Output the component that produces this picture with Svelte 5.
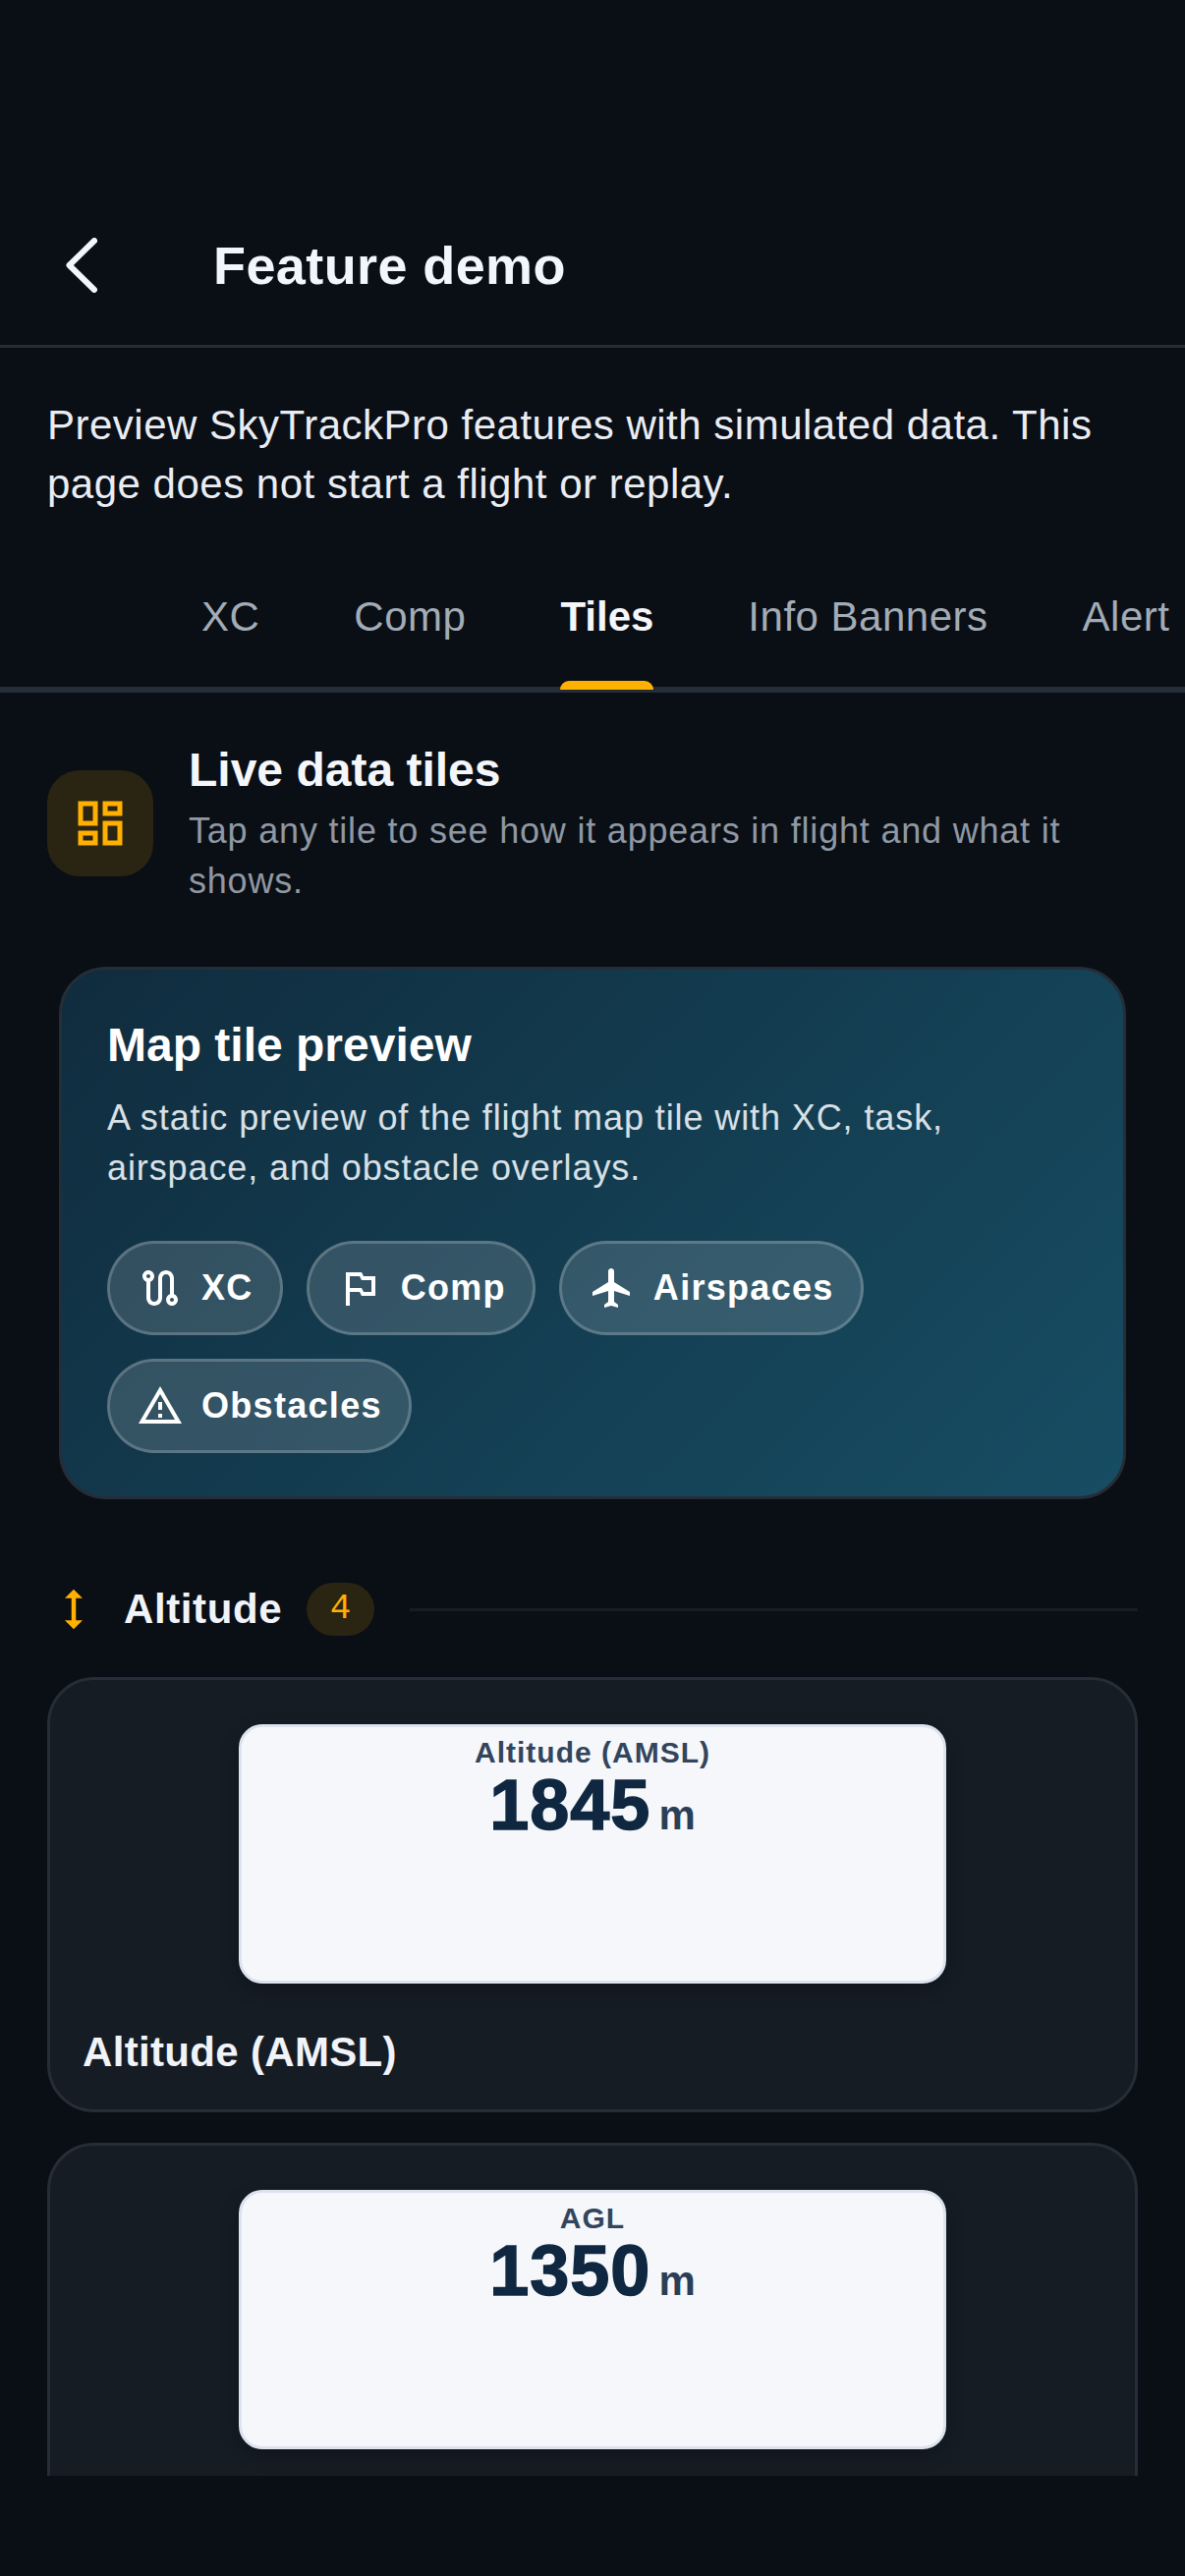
<script>
  const tabs = ['XC', 'Comp', 'Tiles', 'Info Banners', 'Alert'];
  const pills = [
    { label: 'XC', d: 'M19 15.18V7c0-2.21-1.79-4-4-4s-4 1.79-4 4v10c0 1.1-.9 2-2 2s-2-.9-2-2V8.82C8.16 8.4 9 7.3 9 6c0-1.66-1.34-3-3-3S3 4.34 3 6c0 1.3.84 2.4 2 2.82V17c0 2.21 1.79 4 4 4s4-1.79 4-4V7c0-1.1.9-2 2-2s2 .9 2 2v8.18c-1.16.41-2 1.51-2 2.82 0 1.66 1.34 3 3 3s3-1.34 3-3c0-1.3-.84-2.4-2-2.82zM6 5c.55 0 1 .45 1 1s-.45 1-1 1-1-.45-1-1 .45-1 1-1zm12 14c-.55 0-1-.45-1-1s.45-1 1-1 1 .45 1 1-.45 1-1 1z' },
    { label: 'Comp', d: 'M14 6l-1-2H5v17h2v-7h5l1 2h7V6h-6zm4 8h-4l-1-2H7V6h5l1 2h5v6z' },
    { label: 'Airspaces', d: 'M21 16v-2l-8-5V3.5c0-.83-.67-1.5-1.5-1.5S10 2.67 10 3.5V9l-8 5v2l8-2.5V19l-2 1.5V22l3.5-1 3.5 1v-1.5L13 19v-5.5l8 2.5z' },
    { label: 'Obstacles', d: 'M12 5.99L19.53 19H4.47L12 5.99M12 2L1 21h22L12 2zm1 14h-2v2h2v-2zm0-6h-2v4h2v-4z' }
  ];
  const tiles = [
    { inner: 'Altitude (AMSL)', value: '1845', unit: 'm', name: 'Altitude (AMSL)' },
    { inner: 'AGL', value: '1350', unit: 'm', name: '' }
  ];
</script>

<div class="page">
  <header class="top">
    <button class="back" aria-label="Back">
      <svg viewBox="0 0 32 56" width="32" height="56" fill="none"><path d="M29 3 3.5 28 29 53" stroke="#f2f5fa" stroke-width="6" stroke-linecap="round" stroke-linejoin="round"/></svg>
    </button>
    <h1>Feature demo</h1>
  </header>

  <p class="intro">Preview SkyTrackPro features with simulated data. This page does not start a flight or replay.</p>

  <nav class="tabs">
    {#each tabs as t}
      <span class="tab" class:active={t === 'Tiles'}>{t}</span>
    {/each}
  </nav>

  <main class="scroll">
    <section class="head">
      <div class="head-icon">
        <svg viewBox="0 0 24 24" width="60" height="60" fill="#ffb000"><path d="M19 5v2h-4V5h4M9 5v6H5V5h4m10 8v6h-4v-6h4M9 17v2H5v-2h4M21 3h-8v6h8V3zM11 3H3v10h8V3zm10 8h-8v10h8V11zm-10 4H3v6h8v-6z"/></svg>
      </div>
      <div class="head-text">
        <h2>Live data tiles</h2>
        <p>Tap any tile to see how it appears in flight and what it shows.</p>
      </div>
    </section>

    <section class="map">
      <h3>Map tile preview</h3>
      <p>A static preview of the flight map tile with XC, task, airspace, and obstacle overlays.</p>
      <div class="pills">
        {#each pills as p}
          <span class="pill">
            <svg viewBox="0 0 24 24" width="48" height="48" fill="#fff"><path d={p.d}/></svg>
            {p.label}
          </span>
        {/each}
      </div>
    </section>

    <div class="group">
      <svg viewBox="0 0 24 24" width="54" height="54" fill="#ffb000"><path d="M13 6.99h3L12 3 8 6.99h3v10.02H8L12 21l4-3.99h-3z"/></svg>
      <span class="group-name">Altitude</span>
      <span class="badge">4</span>
      <span class="rule"></span>
    </div>

    <div class="list">
      {#each tiles as t}
        <article class="tile">
          <div class="preview">
            <div class="p-label">{t.inner}</div>
            <div class="p-value"><span class="num">{t.value}</span><span class="unit">{t.unit}</span></div>
          </div>
          {#if t.name}<div class="name">{t.name}</div>{/if}
        </article>
      {/each}
    </div>
  </main>
</div>

<style>
  :global(body) { margin: 0; background: #0a0e15; }
  .page {
    width: 1206px; height: 2622px; padding-bottom: 102px; box-sizing: border-box;
    display: flex; flex-direction: column; overflow: hidden;
    background: #0a0e15; color: #f2f5fa;
    font-family: "Liberation Sans", Arial, sans-serif;
  }
  .top {
    display: flex; align-items: center; height: 354px; padding-top: 189px;
    box-sizing: border-box; border-bottom: 3px solid #252e38; flex: none;
  }
  .back { background: none; border: 0; padding: 0; margin-left: 67px; width: 150px; height: 56px; text-align: left; display: block; }
  h1 { margin: 0; font-size: 54px; line-height: 66px; font-weight: 700; letter-spacing: .4px; }
  .intro { margin: 0; padding: 49px 48px 0; height: 120px; font-size: 42px; line-height: 60px; letter-spacing: .5px; color: #e9edf3; flex: none; }
  .tabs {
    flex: none; display: flex; height: 182px; box-sizing: border-box; padding: 75px 0 0 157px;
    border-bottom: 6px solid #252e38; white-space: nowrap; overflow: visible;
  }
  .tab { position: relative; padding: 0 48px; font-size: 42px; line-height: 60px; letter-spacing: .5px; color: #a2acb6; height: 60px; }
  .tab.active { color: #f4f6fa; font-weight: 700; letter-spacing: 0; }
  .tab.active::after {
    content: ''; position: absolute; left: 48px; right: 48px; top: 95px; height: 9px;
    background: #ffb000; border-radius: 9px 9px 0 0;
  }
  .scroll { flex: 1; min-height: 0; overflow: hidden; padding: 48px 48px 0; }
  .head { display: flex; gap: 36px; }
  .head-icon {
    flex: none; width: 108px; height: 108px; margin-top: 31px; border-radius: 33px; background: #2a2412;
    display: flex; align-items: center; justify-content: center;
  }
  h2 { margin: 1px 0 0; font-size: 48px; line-height: 60px; font-weight: 700; color: #f4f6fa; }
  .head-text p { margin: 6px 0 0; font-size: 36px; line-height: 51px; color: #8f98a3; letter-spacing: .8px; }
  .map {
    margin: 62px 12px 0; padding: 47px 46px 44px; border: 3px solid #252e38; border-radius: 48px;
    background: linear-gradient(135deg, #102c3e, #174d63);
  }
  h3 { margin: 0; font-size: 48px; line-height: 60px; font-weight: 700; color: #fff; }
  .map p { margin: 18px 0 0; font-size: 36px; line-height: 51px; color: #d8e0e6; letter-spacing: .9px; }
  .pills { display: flex; flex-wrap: wrap; gap: 24px; margin-top: 49px; }
  .pill {
    display: inline-flex; align-items: center; gap: 18px; height: 96px; box-sizing: border-box;
    padding: 0 27px; border: 3px solid rgba(255,255,255,.2); border-radius: 48px;
    background: rgba(255,255,255,.14); color: #fff; font-size: 36px; font-weight: 700; letter-spacing: 1.3px;
  }
  .group { display: flex; align-items: center; height: 54px; margin-top: 85px; }
  .group-name { margin-left: 24px; font-size: 42px; letter-spacing: .6px; font-weight: 700; color: #f0f3f8; }
  .badge {
    margin-left: 25px; width: 69px; height: 54px; border-radius: 27px; background: #2a2412; color: #ffb000;
    font: 36px/54px "Liberation Mono", monospace; text-align: center;
  }
  .rule { flex: 1; height: 3px; margin-left: 36px; background: #161d25; }
  .list { display: flex; flex-direction: column; gap: 31px; margin-top: 42px; }
  .tile { min-height: 443px; box-sizing: border-box; border: 3px solid #252e38; border-radius: 48px; background: #151c24; padding: 45px 33px 31px; }
  .preview {
    width: 720px; height: 264px; box-sizing: border-box; margin: 0 auto; padding-top: 8px;
    border: 3px solid #dde3ee; border-radius: 24px; background: #f5f7fb;
    box-shadow: 0 6px 18px rgba(0,0,0,.25); text-align: center;
  }
  .p-label { font-size: 30px; line-height: 36px; letter-spacing: 1px; font-weight: 700; color: #33455c; }
  .p-value { display: flex; align-items: baseline; justify-content: center; gap: 8px; line-height: 70px; color: #0f2740; }
  .num { font-size: 72px; font-weight: 700; letter-spacing: 1px; -webkit-text-stroke: 1.5px #0f2740; }
  .unit { font-size: 42px; font-weight: 700; color: #2a3f57; }
  .name { margin-top: 43px; font-size: 42px; line-height: 54px; letter-spacing: .33px; font-weight: 700; color: #f0f3f8; }
</style>
